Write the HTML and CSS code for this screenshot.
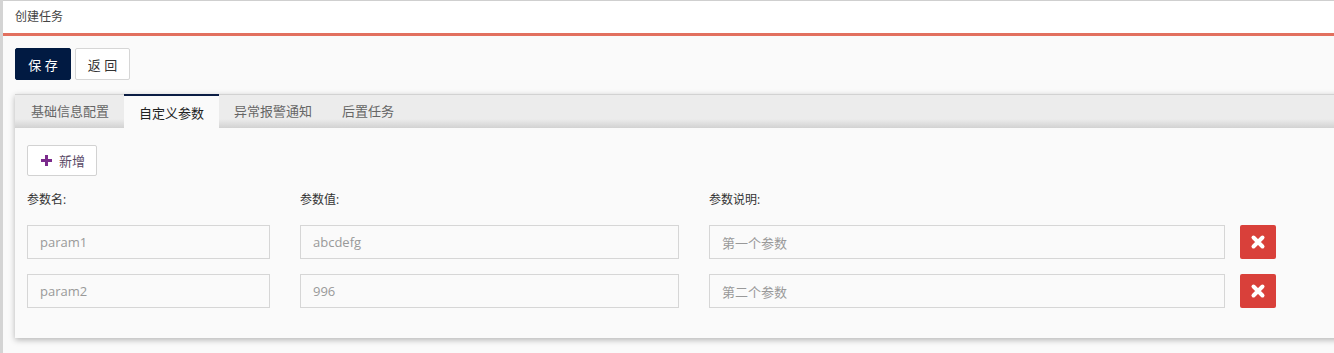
FILE: index.html
```html
<!DOCTYPE html>
<html lang="zh-CN">
<head>
    <meta charset="UTF-8">
    <title>创建任务</title>
    <link rel="stylesheet" href="styles.css">
</head>
<body>
    <div class="page-title">创建任务</div>

    <div class="toolbar">
        <button class="btn btn-primary">保 存</button>
        <button class="btn btn-default">返 回</button>
    </div>

    <div class="tab-panel">
        <ul class="tabs">
            <li>基础信息配置</li>
            <li class="active">自定义参数</li>
            <li>异常报警通知</li>
            <li>后置任务</li>
        </ul>

        <div class="tab-body">
            <button class="btn-add">
                <svg width="11" height="11" viewBox="0 0 11 11"><path d="M4 0h3v4h4v3H7v4H4V7H0V4h4z" fill="#7b2b8c"/></svg>
                新增
            </button>

            <div class="param-row labels">
                <label class="col-name">参数名:</label>
                <label class="col-value">参数值:</label>
                <label class="col-desc">参数说明:</label>
            </div>

            <div class="param-row">
                <input class="col-name" type="text" value="param1">
                <input class="col-value" type="text" value="abcdefg">
                <input class="col-desc" type="text" value="第一个参数">
                <button class="btn-del"><svg width="16" height="16" viewBox="0 0 16 16"><path d="M3.5 3.5l9 9M12.5 3.5l-9 9" stroke="#fff" stroke-width="4" stroke-linecap="round"/></svg></button>
            </div>
            <div class="param-row">
                <input class="col-name" type="text" value="param2">
                <input class="col-value" type="text" value="996">
                <input class="col-desc" type="text" value="第二个参数">
                <button class="btn-del"><svg width="16" height="16" viewBox="0 0 16 16"><path d="M3.5 3.5l9 9M12.5 3.5l-9 9" stroke="#fff" stroke-width="4" stroke-linecap="round"/></svg></button>
            </div>
        </div>
    </div>
</body>
</html>
```

FILE: styles.css
```css
* {
    margin: 0;
    padding: 0;
    box-sizing: border-box;
}

body {
    font-family: "Open Sans", "Noto Sans CJK SC", sans-serif;
    font-size: 13px;
    color: #333;
    background-color: #fafafa;
    border-left: 3px solid #d4d4d4;
    min-height: 353px;
    overflow: hidden;
}

.page-title {
    background-color: #fff;
    border-top: 1px solid #cfcfcf;
    border-bottom: 3px solid #e2705f;
    height: 36px;
    line-height: 32px;
    padding-left: 12px;
    font-size: 12px;
    color: #444;
}

.toolbar {
    display: flex;
    gap: 4px;
    padding: 12px 0 0 12px;
}

.btn {
    height: 32px;
    font-family: inherit;
    font-size: 13px;
    border-radius: 2px;
    cursor: pointer;
}

.btn-primary {
    width: 56px;
    background-color: #011a42;
    border: 1px solid #011a42;
    color: #fff;
}

.btn-default {
    width: 55px;
    background-color: #fff;
    border: 1px solid #d6d6d6;
    color: #333;
}

.tab-panel {
    margin: 14px -20px 0 12px;
    background-color: #fafafa;
    box-shadow: 0 2px 6px rgba(0, 0, 0, 0.28);
}

.tabs {
    display: flex;
    list-style: none;
    height: 34px;
    border-top: 1px solid #d2d2d2;
    background: linear-gradient(to bottom, #ececec 0, #ececec 24px, #cfcfcf 34px);
}

.tabs li {
    padding: 0 15px;
    line-height: 33px;
    color: #666;
    white-space: nowrap;
}

.tabs li:first-child {
    padding-left: 16px;
}

.tabs li.active {
    background-color: #fafafa;
    color: #222;
    border-top: 2px solid #0b1d44;
    margin-top: -1px;
    line-height: 34px;
    height: 35px;
}

.tab-body {
    padding: 17px 12px 30px;
}

.btn-add {
    display: flex;
    align-items: center;
    gap: 7px;
    height: 31px;
    width: 70px;
    padding-left: 13px;
    background-color: #fff;
    border: 1px solid #d2d2d2;
    border-radius: 2px;
    font-family: inherit;
    font-size: 13px;
    color: #5a4a66;
}

.param-row {
    display: flex;
    align-items: center;
    margin-bottom: 15px;
}

.param-row:last-child {
    margin-bottom: 0;
}

.param-row.labels {
    margin: 12px 0 0;
    height: 37px;
    align-items: flex-start;
    padding-top: 2px;
}

.labels label {
    font-size: 12px;
    color: #333;
}

.col-name {
    width: 243px;
    margin-right: 30px;
}

.col-value {
    width: 379px;
    margin-right: 30px;
}

.col-desc {
    width: 516px;
    margin-right: 15px;
}

input {
    height: 34px;
    padding: 0 12px;
    border: 1px solid #d6d6d6;
    background-color: #fafafa;
    font-family: inherit;
    font-size: 13px;
    color: #999;
    outline: none;
}

.btn-del {
    width: 36px;
    height: 34px;
    background-color: #d9403a;
    border: none;
    border-radius: 2px;
    display: flex;
    align-items: center;
    justify-content: center;
}
```
